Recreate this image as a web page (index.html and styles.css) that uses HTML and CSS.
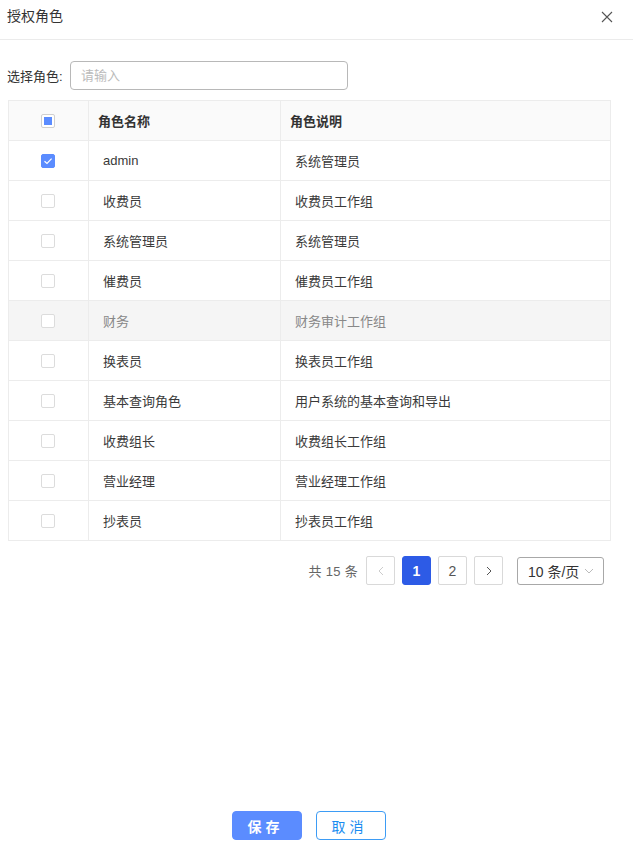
FILE: index.html
```html
<!DOCTYPE html>
<html lang="zh-CN">
<head>
    <meta charset="UTF-8">
    <title>授权角色</title>
    <link rel="stylesheet" href="styles.css">
</head>
<body>
    <div class="dialog">
        <div class="dialog-header">
            <span class="dialog-title">授权角色</span>
            <span class="dialog-close">
                <svg width="12" height="12" viewBox="0 0 12 12"><path d="M1 1L11 11M11 1L1 11" stroke="#555" stroke-width="1.1" fill="none"/></svg>
            </span>
        </div>

        <div class="dialog-body">
            <div class="search-row">
                <label class="search-label">选择角色:</label>
                <input class="search-input" type="text" placeholder="请输入">
            </div>

            <table class="role-table">
                <thead>
                    <tr>
                        <th class="col-check"><span class="checkbox indeterminate"></span></th>
                        <th class="col-name">角色名称</th>
                        <th class="col-desc">角色说明</th>
                    </tr>
                </thead>
                <tbody>
                    <tr>
                        <td class="col-check"><span class="checkbox checked">
                            <svg width="10" height="10" viewBox="0 0 10 10"><path d="M1.5 5.2L4 7.5L8.6 2.6" stroke="#fff" stroke-width="1.2" fill="none"/></svg>
                        </span></td>
                        <td>admin</td>
                        <td>系统管理员</td>
                    </tr>
                    <tr><td class="col-check"><span class="checkbox"></span></td><td>收费员</td><td>收费员工作组</td></tr>
                    <tr><td class="col-check"><span class="checkbox"></span></td><td>系统管理员</td><td>系统管理员</td></tr>
                    <tr><td class="col-check"><span class="checkbox"></span></td><td>催费员</td><td>催费员工作组</td></tr>
                    <tr class="row-hover"><td class="col-check"><span class="checkbox"></span></td><td>财务</td><td>财务审计工作组</td></tr>
                    <tr><td class="col-check"><span class="checkbox"></span></td><td>换表员</td><td>换表员工作组</td></tr>
                    <tr><td class="col-check"><span class="checkbox"></span></td><td>基本查询角色</td><td>用户系统的基本查询和导出</td></tr>
                    <tr><td class="col-check"><span class="checkbox"></span></td><td>收费组长</td><td>收费组长工作组</td></tr>
                    <tr><td class="col-check"><span class="checkbox"></span></td><td>营业经理</td><td>营业经理工作组</td></tr>
                    <tr><td class="col-check"><span class="checkbox"></span></td><td>抄表员</td><td>抄表员工作组</td></tr>
                </tbody>
            </table>

            <div class="pagination">
                <span class="page-total">共 15 条</span>
                <span class="page-btn disabled">
                    <svg width="8" height="10" viewBox="0 0 8 10"><path d="M6 1L2 5L6 9" stroke="#ccc" stroke-width="1" fill="none"/></svg>
                </span>
                <span class="page-btn active">1</span>
                <span class="page-btn">2</span>
                <span class="page-btn">
                    <svg width="8" height="10" viewBox="0 0 8 10"><path d="M2 1L6 5L2 9" stroke="#555" stroke-width="1" fill="none"/></svg>
                </span>
                <span class="page-size">
                    10 条/页
                    <svg width="10" height="6" viewBox="0 0 10 6"><path d="M1 1L5 5L9 1" stroke="#bbb" stroke-width="1" fill="none"/></svg>
                </span>
            </div>
        </div>

        <div class="dialog-footer">
            <button class="btn btn-primary">保存</button>
            <button class="btn btn-default">取消</button>
        </div>
    </div>
</body>
</html>
```

FILE: styles.css
```css
* {
    box-sizing: border-box;
}
body, html {
    margin: 0;
    padding: 0;
    background-color: #ffffff;
    font-family: "Liberation Sans", "Noto Sans CJK SC", sans-serif;
    font-size: 13px;
    color: #333;
}
.dialog {
    width: 633px;
    height: 847px;
    display: flex;
    flex-direction: column;
}
.dialog-header {
    height: 40px;
    padding: 0 20px 0 7px;
    display: flex;
    justify-content: space-between;
    align-items: center;
    border-bottom: 1px solid #ebebeb;
}
.dialog-title {
    font-size: 14px;
    color: #333;
    margin-top: -9px;
}
.dialog-close {
    display: flex;
    margin-top: -6px;
}
.dialog-body {
    flex: 1;
    padding: 21px 22px 0 8px;
}
.search-row {
    display: flex;
    align-items: center;
    height: 28px;
}
.search-label {
    margin-left: -1px;
    width: 63px;
    color: #333;
}
.search-input {
    width: 278px;
    height: 29px;
    border: 1px solid #b8b8b8;
    border-radius: 4px;
    padding: 0 10px;
    font-family: inherit;
    font-size: 13px;
    outline: none;
}
.search-input::placeholder {
    color: #bbb;
}
.role-table {
    margin-top: 11px;
    width: 603px;
    border-collapse: collapse;
    table-layout: fixed;
}
.role-table th,
.role-table td {
    height: 40px;
    border: 1px solid #ececec;
    text-align: left;
    padding: 0 0 0 14px;
    font-weight: normal;
    color: #3a3a3a;
}
.role-table th {
    background-color: #fafafa;
    font-weight: bold;
    padding-left: 9px;
    color: #333;
}
.role-table .col-check {
    width: 80px;
    padding: 0 2px 0 0;
    text-align: center;
}
.role-table .col-name {
    width: 192px;
}
.role-table .row-hover td {
    background-color: #f5f5f5;
    color: #888;
}
.checkbox {
    display: inline-flex;
    justify-content: center;
    align-items: center;
    width: 14px;
    height: 14px;
    border: 1px solid #dcdcdc;
    border-radius: 2px;
    background-color: #fff;
    vertical-align: middle;
}
.checkbox.checked {
    border-color: #5b8cff;
    background-color: #5b8cff;
}
.checkbox.indeterminate {
    border-color: #d0d0d0;
}
.checkbox.indeterminate::after {
    content: "";
    width: 8px;
    height: 8px;
    background-color: #5b8cff;
}
.pagination {
    margin-top: 15px;
    display: flex;
    align-items: center;
    justify-content: flex-end;
    padding-right: 7px;
}
.page-total {
    color: #666;
    margin-right: 8px;
    letter-spacing: 0.3px;
}
.page-btn {
    width: 29px;
    height: 29px;
    margin-right: 7px;
    border: 1px solid #d9d9d9;
    border-radius: 2px;
    display: flex;
    justify-content: center;
    align-items: center;
    color: #555;
    font-size: 14px;
}
.page-btn.active {
    background-color: #2d5be6;
    border-color: #2d5be6;
    color: #fff;
    font-weight: bold;
    border-radius: 3px;
}
.page-size {
    margin-left: 7px;
    width: 87px;
    height: 28px;
    border: 1px solid #a8a8a8;
    border-radius: 3px;
    display: flex;
    align-items: center;
    justify-content: space-between;
    padding: 0 9px 0 10px;
    font-size: 14px;
    color: #333;
}
.dialog-footer {
    display: flex;
    justify-content: center;
    gap: 14px;
    padding: 0 0 7px 0;
    margin-left: -16px;
}
.btn {
    width: 70px;
    height: 29px;
    border-radius: 4px;
    font-family: inherit;
    font-size: 14px;
    letter-spacing: 4px;
    padding-left: 4px;
    cursor: pointer;
}
.btn-primary {
    background-color: #5b8cff;
    border: 1px solid #5b8cff;
    color: #fff;
    font-weight: bold;
}
.btn-default {
    background-color: #fff;
    border: 1px solid #3d9cf5;
    color: #1a8cf0;
}
```
